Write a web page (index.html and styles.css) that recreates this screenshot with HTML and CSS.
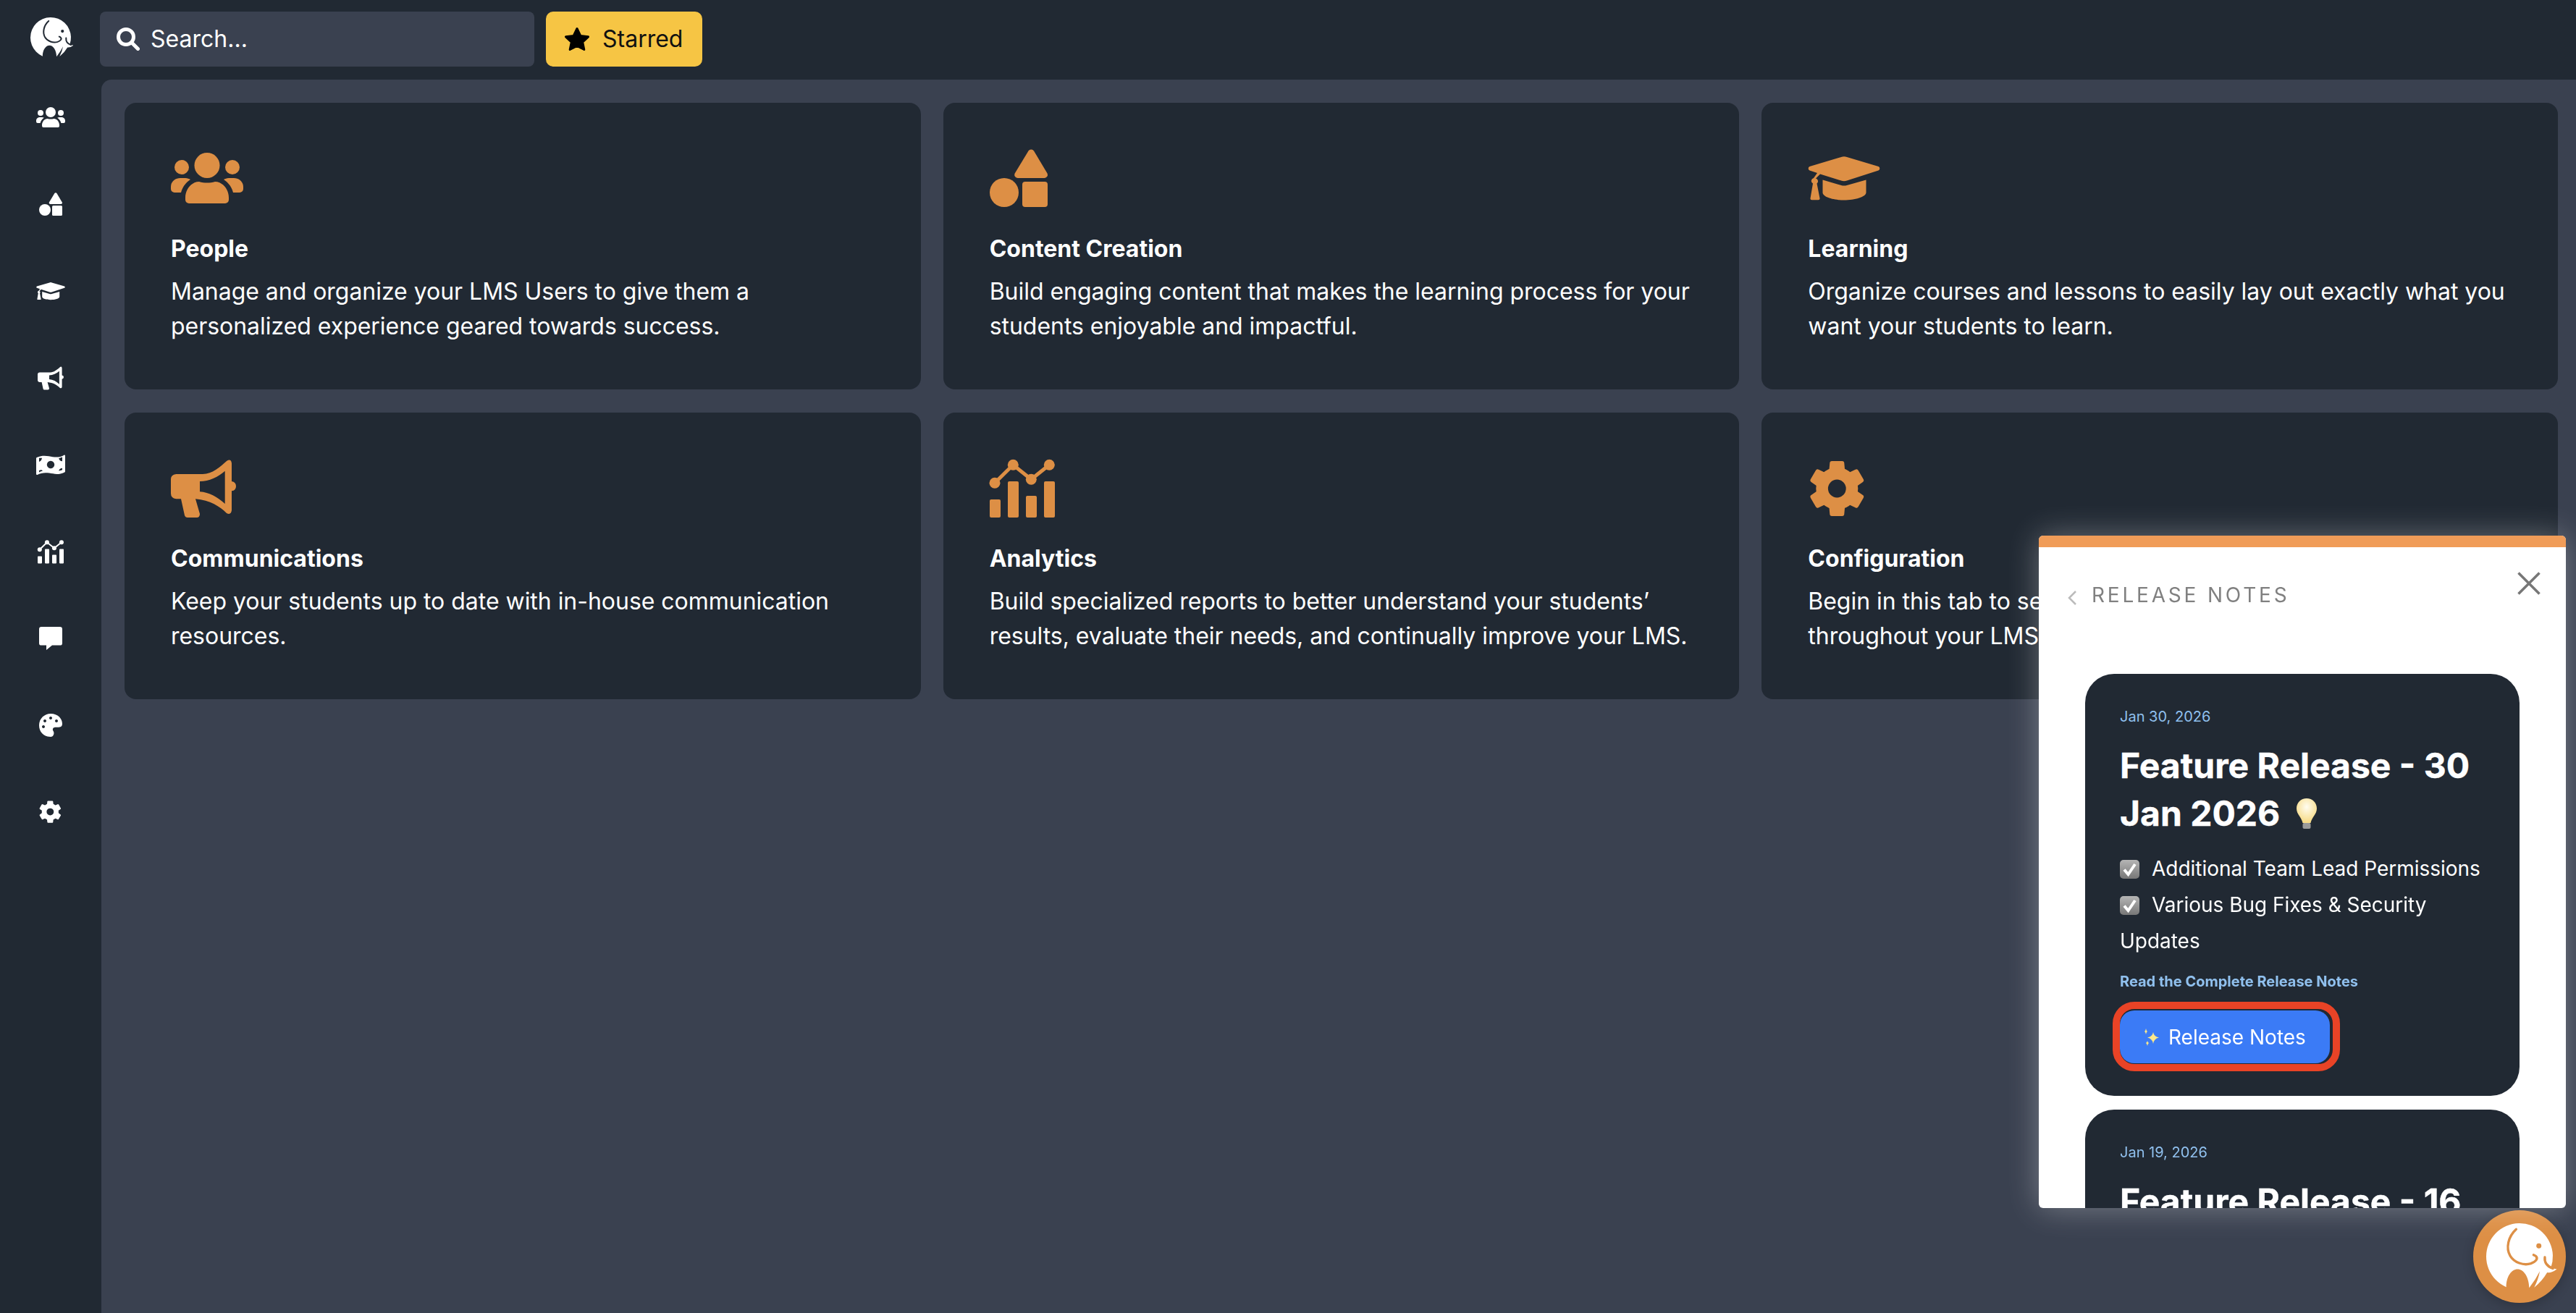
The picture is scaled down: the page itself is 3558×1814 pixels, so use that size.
FILE: index.html
```html
<!DOCTYPE html>
<html lang="en">
<head>
<meta charset="utf-8">
<title>Dashboard</title>
<link rel="stylesheet" href="styles.css">
</head>
<body>
<svg class="sprite" aria-hidden="true">
  <defs>
    <linearGradient id="boxfill" x1="0" y1="0" x2="0" y2="1"><stop offset="0" stop-color="#b5b5b5"/><stop offset="1" stop-color="#777"/></linearGradient>
    <radialGradient id="bulbfill" cx=".5" cy=".35" r=".6"><stop offset="0" stop-color="#fffdf0"/><stop offset="1" stop-color="#f7dc8a"/></radialGradient>
    <symbol id="i-people" viewBox="0 0 100 80" overflow="visible">
      <circle cx="50" cy="22.500" r="17.500"/><circle cx="15" cy="25" r="10"/><circle cx="85" cy="25" r="10"/>
      <path d="M20 67C20 55 29 45 39 45C46 47 54 47 61 45C71 45 80 55 80 67V70a5 5 0 0 1-5 5H25a5 5 0 0 1-5-5Z"/>
      <path d="M0 52C0 45 6 40 13 40H20C23 40 25 41 27 42C21 46 16 52 14 60H5a5 5 0 0 1-5-5Z"/>
      <path d="M100 52C100 45 94 40 87 40H80C77 40 75 41 73 42C79 46 84 52 86 60H95a5 5 0 0 0 5-5Z"/>
    </symbol>
    <symbol id="i-shapes" viewBox="0 0 100 80" overflow="visible">
      <path d="M53.500 2.500a4.500 4.500 0 0 1 7.500 0L79.500 33.500a4.500 4.500 0 0 1-3.800 6.500H38.500a4.500 4.500 0 0 1-3.800-6.500Z"/>
      <circle cx="20" cy="60" r="20"/><rect x="45" y="45" width="35" height="35" rx="4"/>
    </symbol>
    <symbol id="i-cap" viewBox="0 0 100 80" overflow="visible">
      <path d="M46 11Q50 9.500 54 11L97.500 24a3 3 0 0 1 0 5.500L54 43.500Q50 45 46 43.500L17 34.500L11 40.500A4 4 0 0 1 12.500 47.500L16.500 68a2 2 0 0 1-2 2.300H5.500a2 2 0 0 1-2-2.300L7 47.500A4 4 0 0 1 8 40L13 33L2.500 29.500a3 3 0 0 1 0-5.500Z"/>
      <path d="M20.500 42.500L46 50Q50 51 54 50L80.500 42.500V60C80.500 66 65 70.500 50 70.500S20.500 66 20.500 60Z"/>
    </symbol>
    <symbol id="i-horn" viewBox="0 0 100 80" overflow="visible">
      <path fill-rule="evenodd" d="M7.300 21H44C57 21 68 11 77 3Q83-1 84 6V31Q90 32 90 37.700Q90 43.500 84 44.300V71Q83 78 77 75C68 66 54 57 34 55.300L40 76Q40 81 35.700 81H23Q20 81 19 78L14 55.300H7.300Q0 54 0 47.700V27.700Q0 22 7.300 21ZM40 31V45.300C53 46 65 53 74.700 62V16.700C65 25 53 31 40 31Z"/>
    </symbol>
    <symbol id="i-money" viewBox="0 0 100 80" overflow="visible">
      <path fill-rule="evenodd" d="M2 15C25 5 42 11 57 13C72 15 85 14 97 6Q100 6 100 9V63Q100 65 98 66C76 77 60 71 45 69C30 67 16 68 4 75Q0 76 0 72V18Q0 16 2 15ZM50 27a13 13 0 1 0 .01 0ZM10 17V30Q18 28 20 17ZM90 14Q82 17 78 18Q81 28 90 28ZM10 60V66Q16 62 22 62Q20 56 10 60ZM90 52Q81 52 78 61Q84 60 90 58Z"/>
    </symbol>
    <symbol id="i-chart" viewBox="0 0 100 80" overflow="visible">
      <rect x="0" y="56" width="15" height="25" rx="2"/><rect x="25" y="31" width="15" height="50" rx="2"/><rect x="50" y="51" width="15" height="30" rx="2"/><rect x="75" y="31" width="15" height="50" rx="2"/>
      <circle cx="7" cy="33.300" r="7.500"/><circle cx="32.300" cy="8.300" r="7.500"/><circle cx="57.300" cy="28.300" r="7.500"/><circle cx="82.300" cy="8.300" r="7.500"/>
      <path class="chart-line" d="M7 33.300L32.300 8.300L57.300 28.300L82.300 8.300"/>
    </symbol>
    <symbol id="i-chat" viewBox="0 0 100 80" overflow="visible">
      <path d="M18 0H82a8 8 0 0 1 8 8V56a8 8 0 0 1-8 8H55L35 80V64H18a8 8 0 0 1-8-8V8a8 8 0 0 1 8-8Z"/>
    </symbol>
    <symbol id="i-palette" viewBox="0 0 100 80" overflow="visible">
      <path fill-rule="evenodd" d="M50 0C75 0 90 17 90 35C90 45 83 47 75 47H66C58 47 55 54 59 60C64 67 60 80 50 80C25 80 10 62 10 40C10 17 28 0 50 0ZM30 20a5 5 0 1 0 .01 0ZM50 10a5 5 0 1 0 .01 0ZM70 20a5 5 0 1 0 .01 0ZM25 40a5 5 0 1 0 .01 0Z"/>
    </symbol>
    <symbol id="i-gear" viewBox="0 0 100 80" overflow="visible">
      <g transform="translate(40.300 41)">
        <circle class="gear-ring" r="20.700"/>
        <g id="gear-teeth"><path d="M-11-24L-10-35Q-10-38-7-38H7Q10-38 10-35L11-24Z"/></g>
        <use href="#gear-teeth" transform="rotate(60)"/><use href="#gear-teeth" transform="rotate(120)"/><use href="#gear-teeth" transform="rotate(180)"/><use href="#gear-teeth" transform="rotate(240)"/><use href="#gear-teeth" transform="rotate(300)"/>
      </g>
    </symbol>
    <symbol id="i-elephant" viewBox="0 0 100 100" overflow="visible">
      <path class="eleph-body" d="M30 95.800A50 50 0 1 1 97 67L106 69Q98 75 91.500 74Q84 87 72 96.500Q78 85 80.500 72Q74 85 64.500 97C64 80 56 69 47 69C38 69 30 80 30 95.800Z"/>
      <path class="eleph-line" d="M45 9C33 20 29 37 36 49C42 59 56 64 67 60.500C74 58 79 53 74 49L71 47.500"/>
      <path class="eleph-line" d="M88 51C87 60 92 65 100 68"/>
      <circle class="eleph-eye" cx="79" cy="34" r="3.800"/>
    </symbol>
    <symbol id="i-check" viewBox="0 0 27 26">
      <rect width="27" height="26" rx="5" fill="url(#boxfill)"/>
      <path d="M6 13.500L11.500 20L21 6" fill="none" stroke="#fff" stroke-width="4"/>
    </symbol>
  </defs>
</svg>

<div class="app">
  <nav class="sidebar">
    <div class="side-logo"><svg class="logo-mark"><use href="#i-elephant"/></svg></div>
    <a class="side-item"><svg class="side-icon" viewBox="0 0 100 80"><use href="#i-people"/></svg></a>
    <a class="side-item"><svg class="side-icon" viewBox="-10 0 100 80"><use href="#i-shapes"/></svg></a>
    <a class="side-item"><svg class="side-icon" viewBox="0 0 100 80"><use href="#i-cap"/></svg></a>
    <a class="side-item"><svg class="side-icon" viewBox="-5 0 100 80"><use href="#i-horn"/></svg></a>
    <a class="side-item"><svg class="side-icon" viewBox="0 0 100 80"><use href="#i-money"/></svg></a>
    <a class="side-item"><svg class="side-icon" viewBox="-5 0 100 80"><use href="#i-chart"/></svg></a>
    <a class="side-item"><svg class="side-icon" viewBox="0 0 100 80"><use href="#i-chat"/></svg></a>
    <a class="side-item"><svg class="side-icon" viewBox="0 0 100 80"><use href="#i-palette"/></svg></a>
    <a class="side-item"><svg class="side-icon" viewBox="-8 2 100 80"><use href="#i-gear"/></svg></a>
  </nav>

  <div class="column">
    <header class="topbar">
      <div class="search">
        <svg class="search-icon" viewBox="0 0 32 32"><circle cx="13" cy="13" r="10.500"/><path d="M21 21L29.500 29.500"/></svg>
        <span>Search...</span>
      </div>
      <button class="starred">
        <svg class="star-icon" viewBox="0 0 36 34"><path d="M18 2.500L22.800 12.500L33.500 13.800L25.700 21.200L27.800 31.500L18 26.400L8.200 31.500L10.300 21.200L2.500 13.800L13.200 12.500Z"/></svg>
        <span>Starred</span>
      </button>
    </header>

    <main class="main">
      <section class="grid">
        <article class="card">
          <svg class="card-icon"><use href="#i-people"/></svg>
          <h2 class="card-title">People</h2>
          <p class="card-text">Manage and organize your LMS Users to give them a personalized experience geared towards success.</p>
        </article>
        <article class="card">
          <svg class="card-icon"><use href="#i-shapes"/></svg>
          <h2 class="card-title">Content Creation</h2>
          <p class="card-text">Build engaging content that makes the learning process for your students enjoyable and impactful.</p>
        </article>
        <article class="card">
          <svg class="card-icon"><use href="#i-cap"/></svg>
          <h2 class="card-title">Learning</h2>
          <p class="card-text">Organize courses and lessons to easily lay out exactly what you want your students to learn.</p>
        </article>
        <article class="card">
          <svg class="card-icon"><use href="#i-horn"/></svg>
          <h2 class="card-title">Communications</h2>
          <p class="card-text">Keep your students up to date with in-house communication resources.</p>
        </article>
        <article class="card">
          <svg class="card-icon"><use href="#i-chart"/></svg>
          <h2 class="card-title">Analytics</h2>
          <p class="card-text">Build specialized reports to better understand your students’ results, evaluate their needs, and continually improve your LMS.</p>
        </article>
        <article class="card">
          <svg class="card-icon"><use href="#i-gear"/></svg>
          <h2 class="card-title">Configuration</h2>
          <p class="card-text">Begin in this tab to set up and adjust the settings used throughout your LMS.</p>
        </article>
      </section>
    </main>
  </div>
</div>

<a class="launcher"><svg class="launcher-mark"><use href="#i-elephant"/></svg></a>

<aside class="notes">
  <div class="notes-bar"></div>
  <div class="notes-head">
    <svg class="notes-back" viewBox="0 0 14 22"><path d="M12 2L3 11L12 20"/></svg>
    <span class="notes-label">RELEASE NOTES</span>
    <svg class="notes-close" viewBox="0 0 32 32"><path d="M1.500 1.500L30.500 30.500M30.500 1.500L1.500 30.500"/></svg>
  </div>
  <div class="notes-list">
    <article class="note">
      <div class="note-date">Jan 30, 2026</div>
      <h3 class="note-title">Feature Release - 30 Jan 2026 <svg class="bulb" viewBox="0 0 30 45"><path d="M15 1C23 1 29 7 29 15C29 23 22 27 20.500 35H9.500C8 27 1 23 1 15C1 7 7 1 15 1Z" fill="url(#bulbfill)"/><rect x="9.500" y="35" width="11" height="8" rx="2" fill="#9a9a9a"/></svg></h3>
      <ul class="note-items">
        <li><svg class="tick"><use href="#i-check"/></svg>Additional Team Lead Permissions</li>
        <li><svg class="tick"><use href="#i-check"/></svg>Various Bug Fixes &amp; Security Updates</li>
      </ul>
      <a class="note-link">Read the Complete Release Notes</a>
      <div class="note-action">
        <button class="note-button"><svg class="sparkle" viewBox="0 0 24 24"><path d="M14 5Q15 11 22 12.500Q15 14 14 21Q13 14 6 12.500Q13 11 14 5Z" fill="#fbe88a"/><path d="M4 0Q4.500 3 6 4Q4.500 5 4 8Q3.500 5 2 4Q3.500 3 4 0Z" fill="#fbe88a"/><path d="M6 17Q6.500 19 8 20Q6.500 21 6 24Q5.500 21 4 20Q5.500 19 6 17Z" fill="#fbe88a"/></svg>Release Notes</button>
      </div>
    </article>
    <article class="note">
      <div class="note-date">Jan 19, 2026</div>
      <h3 class="note-title">Feature Release - 16 Jan 2026</h3>
    </article>
  </div>
</aside>
</body>
</html>
```

FILE: styles.css
```css
*, *::after { box-sizing: border-box; }

html, body { height: 100%; }

body {
  margin: 0;
  overflow: hidden;
  background: #212933;
  color: #fff;
  font-family: Inter, "Noto Sans", sans-serif;
}

.sprite { position: absolute; width: 0; height: 0; overflow: hidden; }

.chart-line { fill: none; stroke: currentColor; stroke-width: 5; }
.gear-ring { fill: none; stroke: currentColor; stroke-width: 16.6; }
.eleph-body { fill: currentColor; }
.eleph-line { fill: none; stroke: var(--line); stroke-width: 3.6; stroke-linecap: round; }
.eleph-eye { fill: var(--line); }

.app { display: flex; height: 100%; }

.sidebar { flex: 0 0 140px; display: flex; flex-direction: column; align-items: center; }
.side-logo { height: 102px; display: flex; align-items: center; justify-content: center; padding-top: 2px; }
.logo-mark { --line: #212933; width: 56px; height: 56px; color: #fff; overflow: visible; }
.side-item { height: 120px; display: flex; align-items: center; justify-content: center; }
.side-icon { width: 40px; height: 32px; fill: #fff; color: #fff; overflow: visible; }

.column { flex: 1; min-width: 0; display: flex; flex-direction: column; }

.topbar { height: 110px; flex: none; display: flex; gap: 16px; padding-top: 16px; margin-left: -2px; }

.search {
  width: 600px; height: 76px;
  display: flex; align-items: center; gap: 15px;
  padding-left: 23px;
  background: #3a4150;
  border-radius: 8px;
  font-size: 32px; line-height: 48px; color: #fff;
}
.search-icon { width: 32px; height: 32px; fill: none; stroke: #fff; stroke-width: 5; stroke-linecap: round; }

.starred {
  width: 216px; height: 76px;
  display: flex; align-items: center; gap: 17px;
  padding: 0 0 0 25px;
  background: #f6c544;
  border: 0; border-radius: 10px;
  font: 400 32px/48px Inter, sans-serif; color: #111;
}
.star-icon { width: 36px; height: 34px; fill: #000; stroke: #000; stroke-width: 3; stroke-linejoin: round; }

.main {
  flex: 1;
  background: #3a4150;
  border-top-left-radius: 14px;
  padding: 32px 25px 0 32px;
}

.grid { display: grid; grid-template-columns: repeat(3, 1fr); gap: 32px 31px; }

.card {
  height: 396px;
  padding: 64px 64px 0;
  background: #212933;
  border-radius: 16px;
}
.card-icon { display: block; width: 100px; height: 80px; fill: #dd8f45; color: #dd8f45; overflow: visible; }
.card-title { margin: 34px 0 0; font-size: 32px; line-height: 48px; font-weight: 700; }
.card-text { margin: 11px 0 0; font-size: 32px; line-height: 48px; font-weight: 400; letter-spacing: -.03px; }

.launcher {
  --line: #dd8f45;
  position: fixed; left: 3416px; top: 1672px;
  width: 128px; height: 128px;
  display: flex; align-items: center; justify-content: center;
  background: #dd8f45;
  border-radius: 50%;
  box-shadow: 0 4px 16px rgba(0, 0, 0, .2);
}
.launcher-mark { width: 92px; height: 92px; color: #fff; overflow: visible; }

.notes {
  position: fixed; left: 2816px; top: 740px;
  width: 728px; height: 929px;
  display: flex; flex-direction: column;
  background: #fff;
  border-radius: 6px;
  overflow: hidden;
  box-shadow: 0 0 44px rgba(255, 255, 255, .32);
}
.notes-bar { flex: none; height: 16px; background: #f09c58; }
.notes-head { flex: none; height: 175px; display: flex; align-items: flex-start; padding: 55px 35px 0 39px; }
.notes-back { width: 14px; height: 22px; margin-top: 4px; fill: none; stroke: #bbb; stroke-width: 2.5; }
.notes-label { margin-left: 20px; font-size: 28px; line-height: 34px; letter-spacing: 3.8px; color: #808080; margin-top: -6px; }
.notes-close { width: 32px; height: 32px; margin-left: auto; margin-top: -21px; fill: none; stroke: #777; stroke-width: 3.6; }

.notes-list { flex: 1; min-height: 0; padding: 0 64px; display: flex; flex-direction: column; gap: 19px; }

.note { flex: none; padding: 44px 48px 44px; background: #212933; border-radius: 40px; }
.note-date { font-size: 20px; line-height: 30px; color: #90c0ee; }
.note-title { margin: 20px 0 0; font-size: 48px; line-height: 66px; font-weight: 700; -webkit-text-stroke: .4px #fff; }
.bulb { width: 30px; height: 45px; margin-left: 10px; vertical-align: -6px; }

.note-items { list-style: none; margin: 18px 0 0; padding: 0; font-size: 28px; line-height: 50px; letter-spacing: -.03px; }
.tick { display: inline-block; width: 27px; height: 26px; margin-right: 17px; vertical-align: -4px; }

.note-link { display: block; margin-top: 16px; font-size: 20px; line-height: 30px; font-weight: 700; color: #90c0ee; }

.note-action { position: relative; width: 290px; margin-top: 25px; margin-bottom: 1px; }
.note-action::after {
  content: "";
  position: absolute; left: -10px; top: -12px;
  width: 314px; height: 96px;
  border: 10px solid #e94326;
  border-radius: 30px;
}
.note-button {
  display: flex; align-items: center; gap: 11px;
  width: 290px; height: 73px;
  padding: 0 0 0 32px;
  background: #3b7bf6;
  border: 0; border-radius: 20px;
  font: 400 28px/40px Inter, sans-serif; color: #fff;
}
.sparkle { width: 24px; height: 24px; flex: none; }
```
